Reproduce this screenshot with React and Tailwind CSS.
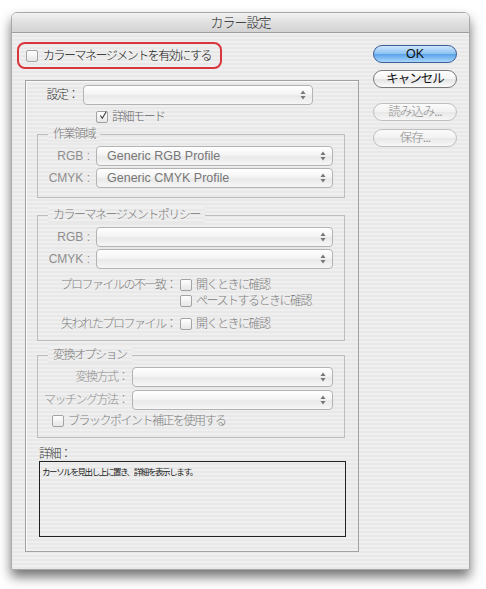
import React from 'react';

const stripes =
  'bg-[repeating-linear-gradient(180deg,#efefef_0px,#efefef_2px,#e8e8e8_2px,#e8e8e8_4px)]';

function Arrows() {
  return (
    <svg width="6" height="10" viewBox="0 0 6 10" className="ml-auto mr-[6px]">
      <path d="M3 0.5 L5.5 4 L0.5 4 Z" fill="#777" />
      <path d="M3 9.5 L5.5 6 L0.5 6 Z" fill="#777" />
    </svg>
  );
}

function Select({ width, value }) {
  return (
    <div
      className={`flex items-center h-[20px] rounded-[4px] border border-[#b3b3b3] bg-[linear-gradient(#ffffff,#f4f4f4_45%,#e9e9e9_55%,#f6f6f6)] ${width}`}
    >
      {value && (
        <span className="pl-[10px] text-[12.5px] text-[#777] font-['Liberation_Sans',sans-serif]">
          {value}
        </span>
      )}
      <Arrows />
    </div>
  );
}

function Box({ checked }) {
  return (
    <div className="w-[12px] h-[12px] shrink-0 rounded-[2px] border border-[#a3a3a3] bg-[linear-gradient(#ffffff,#e6e6e6)] flex items-center justify-center">
      {checked && (
        <svg width="13" height="13" viewBox="0 0 12 12" className="-mt-[3px] ml-[2px]">
          <path d="M2 6 L5 10 L11 0" fill="none" stroke="#444" strokeWidth="1.7" />
        </svg>
      )}
    </div>
  );
}

function Jp({ children, className = '' }) {
  return <span className={`tracking-[-1.5px] font-light whitespace-nowrap ${className}`}>{children}</span>;
}

function Group({ label, height, top, children }) {
  return (
    <div className={`relative ml-[11px] w-[308px] border border-[#bdbdbd] ${height} ${top}`}>
      <span className={`absolute -top-[9px] left-[10px] px-[5px] text-[12px] leading-[16px] text-[#777] ${stripes}`}>
        <Jp>{label}</Jp>
      </span>
      {children}
    </div>
  );
}

function Row({ label, labelW, gap, width, value, top }) {
  return (
    <div className={`flex items-center h-[20px] ${top}`}>
      <div className={`text-right text-[12px] text-[#8e8e8e] ${labelW}`}>{label}</div>
      <div className={gap}>
        <Select width={width} value={value} />
      </div>
    </div>
  );
}

function Button({ children, kind }) {
  const styles = {
    ok: 'border-[#3b5f96] bg-[linear-gradient(#cfe6fc,#8cc2f2_48%,#5aa3ea_52%,#a9d6fc)] text-[#111]',
    normal: 'border-[#7a7a7a] bg-[linear-gradient(#ffffff,#f4f4f4_48%,#e4e4e4_52%,#fbfbfb)] text-[#111]',
    disabled: 'border-[#c0c0c0] bg-[linear-gradient(#fbfbfb,#f2f2f2_48%,#e8e8e8_52%,#f7f7f7)] text-[#8c8c8c]',
  };
  return (
    <div
      className={`w-[84px] h-[18px] rounded-full border flex items-center justify-center text-[12.5px] ${styles[kind]}`}
    >
      {children}
    </div>
  );
}

export default function App() {
  return (
    <div className="min-h-screen bg-white pt-[12px] pl-[11px] font-['Liberation_Sans','Noto_Sans_CJK_JP',sans-serif]">
      <div className="w-[459px] h-[558px] rounded-t-[6px] border border-[#a9a9a9] shadow-[0_7px_12px_rgba(0,0,0,0.55)] overflow-hidden">
        <div className="h-[20px] flex items-center justify-center border-b border-[#9f9f9f] bg-[linear-gradient(#f2f2f2,#e0e0e0_50%,#d3d3d3)] text-[13px] text-[#222]">
          <Jp className="tracking-[-1px]">カラー設定</Jp>
        </div>

        <div className={`flex h-[537px] ${stripes}`}>
          <div className="pl-[5px] pt-[9px] w-[347px] shrink-0">
            <div className="w-[205px] h-[27px] rounded-[8px] border-2 border-[#d8353c] flex items-center pl-[7px]">
              <Box />
              <Jp className="ml-[5px] text-[12px] text-[#111]">カラーマネージメントを有効にする</Jp>
            </div>

            <div className="mt-[11px] ml-[8px] w-[334px] h-[472px] border border-[#a2a2a2] shadow-[inset_1px_1px_0_#fafafa]">
              <div className="mt-[4px] flex items-center h-[20px]">
                <div className="w-[52px] text-right text-[12px] text-[#333]">
                  <Jp>設定：</Jp>
                </div>
                <div className="ml-[5px]">
                  <Select width="w-[230px]" />
                </div>
              </div>

              <div className="mt-[6px] pl-[70px] h-[12px] flex items-center">
                <Box checked />
                <Jp className="ml-[4px] text-[12px] text-[#666]">詳細モード</Jp>
              </div>

              <Group label="作業領域" height="h-[64px]" top="mt-[11px]">
                <div className="pt-[11px] flex flex-col gap-[2px]">
                  <Row label="RGB :" labelW="w-[52px]" gap="ml-[6px]" width="w-[237px]" value="Generic RGB Profile" />
                  <Row label="CMYK :" labelW="w-[52px]" gap="ml-[6px]" width="w-[237px]" value="Generic CMYK Profile" />
                </div>
              </Group>

              <Group label="カラーマネージメントポリシー" height="h-[126px]" top="mt-[17px]">
                <div className="pt-[11px] flex flex-col gap-[2px]">
                  <Row label="RGB :" labelW="w-[52px]" gap="ml-[6px]" width="w-[237px]" />
                  <Row label="CMYK :" labelW="w-[52px]" gap="ml-[6px]" width="w-[237px]" />
                </div>
                <div className="mt-[9px] flex items-center h-[14px] text-[12px] text-[#808080]">
                  <div className="w-[138px] text-right">
                    <Jp>プロファイルの不一致：</Jp>
                  </div>
                  <div className="ml-[4px]">
                    <Box />
                  </div>
                  <Jp className="ml-[4px]">開くときに確認</Jp>
                </div>
                <div className="mt-[2px] flex items-center h-[14px] pl-[142px] text-[12px] text-[#808080]">
                  <Box />
                  <Jp className="ml-[4px]">ペーストするときに確認</Jp>
                </div>
                <div className="mt-[9px] flex items-center h-[14px] text-[12px] text-[#808080]">
                  <div className="w-[138px] text-right">
                    <Jp>失われたプロファイル：</Jp>
                  </div>
                  <div className="ml-[4px]">
                    <Box />
                  </div>
                  <Jp className="ml-[4px]">開くときに確認</Jp>
                </div>
              </Group>

              <Group label="変換オプション" height="h-[83px]" top="mt-[14px]">
                <div className="pt-[11px] flex flex-col gap-[3px]">
                  <Row label={<Jp>変換方式：</Jp>} labelW="w-[90px]" gap="ml-[4px]" width="w-[201px]" />
                  <Row label={<Jp>マッチング方法：</Jp>} labelW="w-[90px]" gap="ml-[4px]" width="w-[201px]" />
                </div>
                <div className="mt-[4px] pl-[14px] h-[14px] flex items-center text-[12px] text-[#808080]">
                  <Box />
                  <Jp className="ml-[4px]">ブラックポイント補正を使用する</Jp>
                </div>
              </Group>

              <div className="mt-[9px] ml-[13px] h-[14px] flex items-center text-[12px] text-[#333]">
                <Jp>詳細：</Jp>
              </div>
              <div className="ml-[13px] w-[307px] h-[76px] border border-[#222] pl-[2px] pt-[4px]">
                <div className="text-[8.5px] leading-[12px] text-[#222] tracking-[-1.4px] whitespace-nowrap">
                  カーソルを見出し上に置き、詳細を表示します。
                </div>
              </div>
            </div>
          </div>

          <div className="ml-[14px] pt-[12px] flex flex-col">
            <Button kind="ok">OK</Button>
            <div className="mt-[7px]">
              <Button kind="normal">
                <Jp className="tracking-[-1px] font-normal">キャンセル</Jp>
              </Button>
            </div>
            <div className="mt-[15px]">
              <Button kind="disabled">
                <Jp className="tracking-[-1px]">読み込み...</Jp>
              </Button>
            </div>
            <div className="mt-[8px]">
              <Button kind="disabled">
                <Jp className="tracking-[-1px]">保存...</Jp>
              </Button>
            </div>
          </div>
        </div>
      </div>
    </div>
  );
}
